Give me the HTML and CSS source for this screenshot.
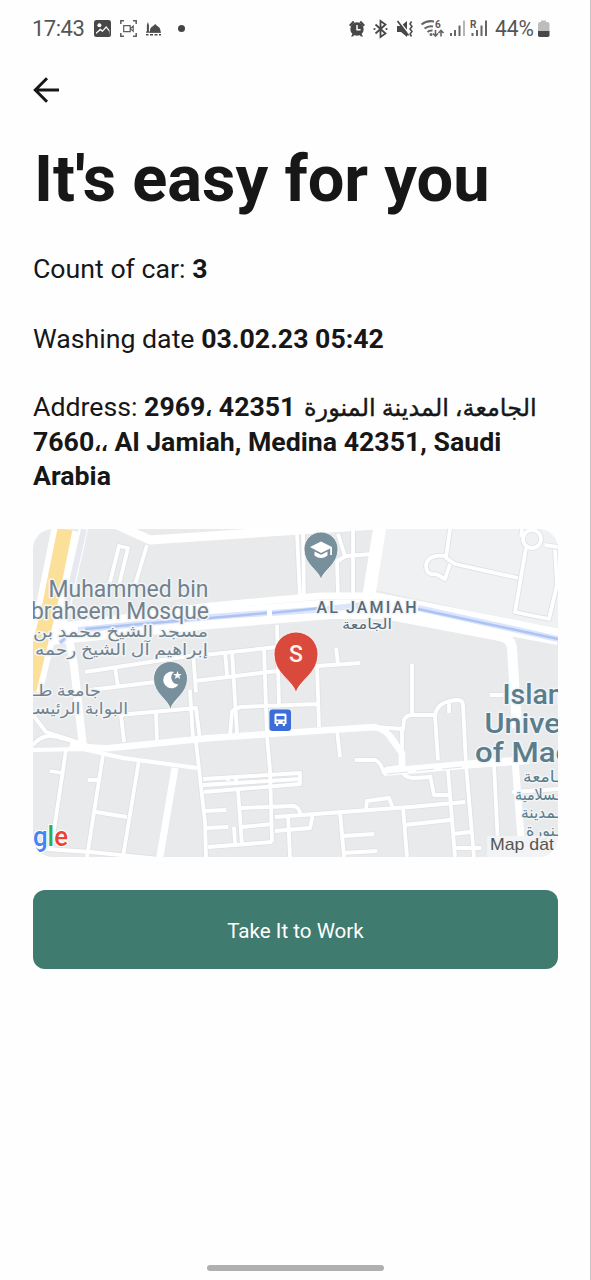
FILE: index.html
```html
<!DOCTYPE html>
<html lang="en">
<head>
<meta charset="utf-8">
<title>It's easy for you</title>
<link rel="stylesheet" href="styles.css">
</head>
<body>
<div class="screen">
  <header class="status">
    <div class="status-left">
      <span class="time">17:43</span>
      <svg class="ic-picture" viewBox="0 0 17 17" width="17" height="17"><rect width="17" height="17" rx="2.5" fill="#484848"/><circle cx="5.4" cy="5.2" r="2" fill="#fff"/><path d="M2 12.500l4.300-4 2.200 1.700L12.200 6l3.300 4.200v4.300h-13.500z" fill="#fff"/><path d="M2 15v-1l4.300-3.500 2.200 1.500 3.700-4 3.300 4v3z" fill="#484848"/></svg>
      <svg class="ic-record" viewBox="0 0 17 17" width="17" height="17" fill="none" stroke="#5d5d5d" stroke-width="1.5"><path d="M.8 4V.8H4M13 .8h3.2V4M16.200 13v3.200H13M4 16.200H.8V13"/><path d="M3.700 5.600h6.500v6H3.700zM10.200 8.600l3-2.500v5z" stroke-width="1.200"/></svg>
      <svg class="ic-mosque" viewBox="0 0 16 16" width="16" height="16" fill="#4c4c4c"><path d="M1.900 1l1 3v7H.9V4zM4 11.500V9.300c0-3.300 3.500-3.800 5.200-6.300 1.700 2.500 5.200 3 5.200 6.300v2.200z"/><path d="M0 10.500h15v1.300H0zM0 13h2.500v1.500H0zm4 0h3v1.500H4zm4.500 0h3v1.500h-3zm4.500 0h2v1.500h-2z"/></svg>
      <i class="dot"></i>
    </div>
    <svg class="status-right" viewBox="345 16 210 26" width="210" height="26">
      <g fill="#484848">
        <circle cx="357" cy="29" r="6.700"/>
        <path d="M349 25l4-4.200 1.600 1.500-4 4.200zM365 25l-4-4.200-1.600 1.500 4 4.200zM351 36.500l2-3.500 1.800 1.200-1.700 2.300zM363 36.500l-2-3.500-1.800 1.200 1.700 2.300z"/>
        <path d="M357 25v4.700h3.600" fill="none" stroke="#fff" stroke-width="1.500"/>
        <path d="M375.500 24.500l10 9-5 3.500V21l5 3.500-10 9" fill="none" stroke="#484848" stroke-width="1.800"/>
        <circle cx="374.500" cy="29" r="1.100"/><circle cx="386.500" cy="29" r="1.100"/>
        <path d="M397 26h4l6-5v16l-6-5h-4z"/>
        <path d="M398.500 20.500l10.500 13" stroke="#fff" stroke-width="1.500"/><path d="M397.500 21l11 14.500" stroke="#484848" stroke-width="1.700"/>
        <path d="M411.500 21.500l-1.500 2.500 2 2.500-2 2.500 2 2.500-2 2.500 1.500 2.500" fill="none" stroke="#484848" stroke-width="1.500"/>
      </g>
      <g fill="none" stroke="#666" stroke-width="2">
        <path d="M421.500 24.500q5.500-4.500 12.500-3M424.500 28.500q4.500-3.300 8.500-2M427.500 32q2-1.800 5-1.500"/>
        <path d="M435.500 30v6m-2.500-2.500 2.500 2.600 2.500-2.600M441 36.500v-6m-2.500 2.500 2.500-2.600 2.500 2.600" stroke-width="1.600"/>
      </g>
      <circle cx="431" cy="34.500" r="1.500" fill="#666"/>
      <text class="tiny" x="435" y="27.500">6</text>
      <g fill="#666"><path d="M450 33h2v3h-2zM454 30h2v6h-2zM458.500 25.500h2V36h-2zM471.500 33h2v3h-2zM476 30h2v6h-2zM480.500 25.500h2V36h-2zM485 20.500h2V36h-2z"/><path d="M463 20.500h2V36h-2z" fill="#b5b5b5"/></g>
      <text class="tiny" x="470" y="27.500">R</text>
      <text class="battery-text" x="495" y="36.300" textLength="39" lengthAdjust="spacingAndGlyphs">44%</text>
      <path d="M541 20.500h5V22h1.500q2 0 2 2v7.500h-11.500V24q0-2 2-2h1z" fill="#bdbdbd"/>
      <path d="M538 31h11.500v4.200q0 1.800-1.800 1.800h-7.900q-1.800 0-1.800-1.800z" fill="#484848"/>
    </svg>
  </header>

  <main class="content">
    <svg class="back" viewBox="0 0 27 26" width="27" height="26" fill="none" stroke="#171717" stroke-width="3"><path d="M26 13H2.500M14 1.300L2.300 13 14 24.700"/></svg>
    <h1>It's easy for you</h1>
    <p class="row count">Count of car: <b>3</b></p>
    <p class="row date">Washing date <b>03.02.23 05:42</b></p>
    <p class="row address">Address: <b>2969<bdi class="comma">،</bdi> 42351</b> <bdi class="arabic" lang="ar">الجامعة، المدينة المنورة</bdi><br><b>7660<bdi class="comma">،،</bdi> Al Jamiah, Medina 42351, Saudi<br>Arabia</b></p>

    <svg class="map" viewBox="33 529 525 328" width="525" height="328">
      <rect x="33" y="529" width="525" height="328" fill="#e8eaeb"/>
      <path d="M386 529L376 590l182 40V529z" fill="#f0f1f3"/>
      <defs>
        <g id="streets">
          <path d="M110 582L119 546l9 2-9 37M147 545l-12 40M297 533l3 65M303 530l1 68M338 534l7 22-8 6 1 34M353 530v65M337 561l9-5 26-2"/>
          <path d="M450 529l-4 29 9 6 63 14M446 556q-18-2-20 9 0 11 10 9l9 5 5-15M526 548l-11 64 34 7 8-34-2-35M522 529l-1 8M545 545l13 2"/>
          <circle cx="532" cy="539" r="9"/>
          <path d="M277 625l2 80M195 656l82-9M195 681l122-15 43-3M336 648l2 16M225 652l2 23M232 651l5 82M264 649l3 88 3 33 2 72M317 665l2 62M230 735l2-24 8-4 78-3M193 652l3 40M85 672l110-17M90 690l98-12M115 667l3 20"/>
          <path d="M190 690l3 50M119 715l77-7 4 32M121 715l3 27M156 712l1 30M33 715l13 17 38 12M33 745q10-12 24-8l33 9"/>
          <path d="M66 750l-13 87M103 755L87 857M139 760l-16 97M50 771l12 2M88 780h10M96 812l31 5M196 742l9 80 1 35M33 848l57 4 90 9"/>
          <path d="M203 779l97-6v11l-96 8M203 785l97-6M228 777v4M236 777v4M205 811l21-1M206 828l22-1M208 847l64-5M234 827l1 16M238 790l4 55M241 808l52-2q6 0 8 10M242 827l30-3M275 831l35-3 3-14M275 817l135-10 55-5M288 815l2 42M340 812l4 45M343 836l31-2M343 853l34-2M366 809l1-8 22-3 4 10M403 807l4 50"/>
          <path d="M355 760h20q5 1 9 13l18-2M385 769l20-3M337 730l3 27M412 664v51M375 727l28 2 1-9q2-5 8-5h24M438 760l-3-44q1-12 15-15l7-1q6 0 6 5l3 60 8 92M449 700v13M402 730v37q0 11 12 11l16-1M430 775l4 20h15M448 770l7 87M494 765l4 80M404 825l46-5M453 834l17-2M455 848h26M490 695h17M512 792l46-3"/>
        </g>
        <g id="avenues">
          <path d="M115 524l35 16 75-5 150-10" stroke-width="9"/>
          <path d="M380 526l-12 75" stroke-width="13"/>
          <path d="M84 526L60 635" stroke-width="9"/>
          <path d="M67 626l7 40 9 81" stroke-width="8"/>
          <path d="M33 750l50-1 40 9 74 10" stroke-width="4"/>
          <path d="M175 768l-16 94" stroke-width="7"/>
          <path d="M70 744q20 5 40 4l100-10 165-11q10 3 14 8l13 18v18" stroke-width="6.500"/>
          <path d="M384 772l90-8 55-4" stroke-width="8"/>
          <path d="M515 760l7 90" stroke-width="7"/>
          <path d="M50 628l160-22 110-10 56 0 182 36" stroke-width="7"/>
          <path d="M50 640l160-16 120-10h55l115 22q11 2 12 12l5 80" stroke-width="10"/>
        </g>
      </defs>
      <g fill="none" stroke-linejoin="round">
        <g stroke="#dfe1e4"><use href="#streets" stroke-width="5.500"/></g>
        <g stroke="#fff"><use href="#streets" stroke-width="3.800"/><use href="#avenues"/></g>
        <path d="M60 634l150-19 110-9h60l178 33" stroke="#fff" stroke-width="12"/>
        <path d="M65 529L50 604 29 690" stroke="#fff" stroke-width="27"/>
        <path d="M65 529L50 604 29 690" stroke="#fbe09a" stroke-width="15"/>
        <path d="M84 529l-17 75" stroke="#e6eaf0" stroke-width="6"/>
        <path d="M78 630l132-13 57-4M272 613l55-4 35-4M418 608l140 31M60 643l5-5" stroke="#dbe5fb" stroke-width="6"/>
        <path d="M85 629l125-11 57-5M272 613l50-5M418 609l140 30M60 643l5-5" stroke="#adc3f4" stroke-width="2.400"/>
        <path d="M387 774l21-2m8-1l18-2m8 0l20-2" stroke="#e1e4e7" stroke-width="1"/>
      </g>

      <g stroke="#fff" stroke-width=".8">
        <path fill="#78909c" d="M321 580c-2-10-17-15-17-31a17 17 0 0 1 34 0c0 16-15 21-17 31z"/>
        <path fill="#78909c" d="M170.500 710c-2-11-17-16-17-31.500a17 17 0 0 1 34 0c0 15.500-15 20.500-17 31.500z"/>
        <path fill="#d94a3d" d="M296 693c-3-13-22-19-22-39a22 22 0 0 1 44 0c0 20-19 26-22 39z"/>
      </g>
      <path d="M310 547l11-5.500 11 5.500v8h-1.800v-6.500L321 553zM314.500 551.500l6.500 3.300 6.500-3.300v4q-6.500 5-13 0z" fill="#fff"/>
      <path d="M174 672a8.300 8.300 0 1 0 4.500 12.500A7 7 0 0 1 174 672z" fill="#fff"/>
      <path d="M177.500 671l1.100 2.900 3.100.1-2.400 1.900.9 3-2.700-1.700-2.600 1.700.8-3-2.400-1.900 3.100-.1z" fill="#fff"/>
      <text class="pin-letter" x="296" y="661.500" text-anchor="middle">S</text>
      <rect x="269.500" y="709.500" width="21.500" height="21.500" rx="3" fill="#3b6ed8"/>
      <path d="M276 713.500h9q1.500 0 1.500 1.500v9h-1.500v2h-2.200v-2h-4.600v2H276v-2h-1.500v-9q0-1.500 1.500-1.500z" fill="#fff"/>
      <path d="M276.500 716h8v3.500h-8zM276.500 721.300h1.800v1.500h-1.800zm6.200 0h1.800v1.500h-1.800z" fill="#3b6ed8"/>

      <g class="label poi">
        <text x="48.500" y="596.500" textLength="160" lengthAdjust="spacingAndGlyphs">Muhammed bin</text>
        <text x="31" y="619" textLength="178" lengthAdjust="spacingAndGlyphs">braheem Mosque</text>
        <text class="ar" x="33" y="636.500" textLength="175" lengthAdjust="spacingAndGlyphs">مسجد الشيخ محمد بن</text>
        <text class="ar" x="35" y="654.500" textLength="173" lengthAdjust="spacingAndGlyphs">إبراهيم آل الشيخ رحمه</text>
        <text class="ar" x="33" y="695.500" textLength="68" lengthAdjust="spacingAndGlyphs">جامعة طـ</text>
        <text class="ar" x="30" y="713.500" textLength="98" lengthAdjust="spacingAndGlyphs">البوابة الرئيسـ</text>
      </g>
      <g class="label area">
        <text x="316.500" y="613" textLength="100" lengthAdjust="spacing">AL JAMIAH</text>
        <text class="ar-small" x="342" y="629" textLength="50" lengthAdjust="spacingAndGlyphs">الجامعة</text>
      </g>
      <g class="label campus">
        <text x="502.500" y="703.500">Islam</text>
        <text x="484.500" y="733" textLength="87" lengthAdjust="spacingAndGlyphs">Univer</text>
        <text x="475" y="762" textLength="98" lengthAdjust="spacingAndGlyphs">of Mad</text>
        <text class="ar" x="523" y="782" textLength="37" lengthAdjust="spacingAndGlyphs">ـامعة</text>
        <text class="ar" x="515" y="800" textLength="45" lengthAdjust="spacingAndGlyphs">ـسلامية</text>
        <text class="ar" x="521" y="818" textLength="39" lengthAdjust="spacingAndGlyphs">ـمدينة</text>
        <text class="ar" x="526" y="836" textLength="34" lengthAdjust="spacingAndGlyphs">ـنورة</text>
      </g>
      <rect x="487" y="836" width="71" height="21" fill="#f3f4f5" opacity=".9"/>
      <text class="credit" x="490" y="850" textLength="64" lengthAdjust="spacingAndGlyphs">Map dat</text>
      <text class="brand" x="33" y="846" textLength="35" lengthAdjust="spacingAndGlyphs"><tspan fill="#4285f4">g</tspan><tspan fill="#34a853">l</tspan><tspan fill="#ea4335">e</tspan></text>
    </svg>

    <button class="action" type="button">Take It to Work</button>
  </main>
  <div class="home-bar"></div>
</div>
</body>
</html>
```

FILE: styles.css
```css
* { box-sizing: border-box; }
body {
  margin: 0;
  background: #fff;
  font-family: Roboto, "DejaVu Sans", sans-serif;
  color: #171717;
}
.screen {
  width: 591px;
  height: 1280px;
  display: flex;
  flex-direction: column;
  border-right: 1px solid #c6c6c6;
  background: #fefefe;
  overflow: hidden;
}
.status {
  height: 58px;
  flex: none;
  display: flex;
  justify-content: space-between;
  padding: 16px 35px 0 32px;
}
.status-left { display: flex; align-items: center; height: 25px; }
.time { width: 62px; font-size: 22px; color: #555; letter-spacing: -0.5px; }
.ic-record { margin-left: 9px; }
.ic-mosque { margin-left: 9px; }
.dot { width: 7px; height: 7px; border-radius: 50%; background: #444; margin-left: 16px; }
.tiny { font-size: 10px; font-weight: 700; fill: #5a5a5a; }
.battery-text { font-size: 21.5px; fill: #555; }
.content {
  flex: 1;
  display: flex;
  flex-direction: column;
  align-items: flex-start;
  padding: 19px 32px 0 33px;
}
.back { display: block; }
h1 {
  margin: 38px 0 0 1px;
  font-size: 65px;
  line-height: 76px;
  font-weight: 700;
  white-space: nowrap;
}
.row { margin: 0; font-size: 26.7px; line-height: 35px; white-space: nowrap; }
.count { margin-top: 35px; }
.date { margin-top: 35px; }
.address { margin-top: 33px; height: 105px; line-height: 34.6px; }
.comma { font-size: 18px; line-height: 1; }
.arabic { font-size: 24px; line-height: 1; -webkit-text-stroke: 0.4px #171717; margin-left: 2px; }
.map { display: block; margin-top: 34px; border-radius: 20px; }
.label { stroke: #f2f4f6; stroke-width: 3px; stroke-linejoin: round; paint-order: stroke; }
.poi { font-size: 23px; fill: #71828e; }
.ar { font-size: 16px; }
.area { font-size: 16px; font-weight: 500; fill: #566b78; }
.ar-small { font-size: 14px; }
.campus { font-size: 28.5px; font-weight: 500; fill: #5a7d8c; }
.campus .ar { font-size: 16px; font-weight: 400; }
.pin-letter { font-size: 23px; font-weight: 500; fill: #fff2ec; }
.credit { font-family: "Liberation Sans", sans-serif; font-size: 17px; fill: #555; }
.brand { font-size: 27px; font-weight: 500; stroke: #fff; stroke-width: 2px; paint-order: stroke; }
.action {
  width: 525px;
  height: 79px;
  margin-top: 33px;
  border: 0;
  border-radius: 12px;
  background: #3f7b6f;
  color: #fff;
  font: 400 20.6px/24px Roboto, sans-serif;
  padding: 2px 0 0;
}
.home-bar {
  flex: none;
  width: 177px;
  height: 6px;
  margin: 0 0 9px 207px;
  border-radius: 3px;
  background: #b0b0b0;
}
```
